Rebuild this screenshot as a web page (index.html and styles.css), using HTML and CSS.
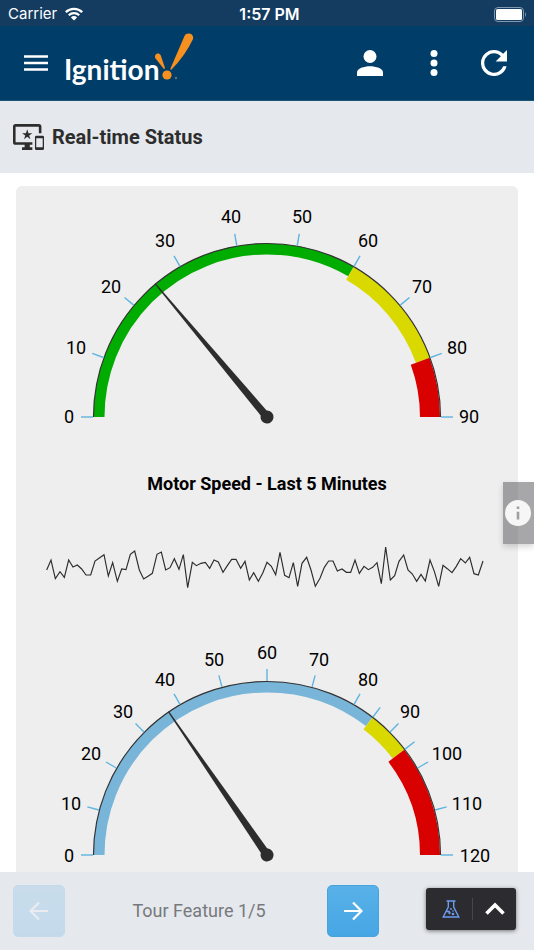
FILE: index.html
```html
<!DOCTYPE html>
<html lang="en">
<head>
<meta charset="utf-8">
<meta name="viewport" content="width=device-width, initial-scale=1">
<title>Real-time Status</title>
<link rel="stylesheet" href="styles.css">
</head>
<body>
<div class="status-bar">
  <div class="carrier"><span>Carrier</span>
    <svg class="wifi" viewBox="0 0 18 14" aria-hidden="true"><g fill="none" stroke="#fff" stroke-width="2.3"><path d="M.8 5.1a11.8 11.8 0 0 1 16.4 0"/><path d="M3.8 8.3a7.4 7.4 0 0 1 10.4 0"/></g><path d="M5.9 10.4a4.4 4.4 0 0 1 6.2 0L9 13.5z" fill="#fff"/></svg>
  </div>
  <time class="clock">1:57 PM</time>
  <svg class="battery" viewBox="0 0 33 15" aria-hidden="true"><rect x=".5" y=".5" width="29" height="14" rx="3.5" fill="none" stroke="#7f99b0"/><rect x="2" y="2" width="26" height="11" rx="1.5" fill="#fff"/><path d="M31 5q2 2.500 0 5z" fill="#7f99b0"/></svg>
</div>
<header class="app-bar">
  <button class="icon-button menu" aria-label="Menu"><svg viewBox="0 0 24 16"><path d="M0 1.500h24M0 8h24M0 14.500h24" stroke="#fff" stroke-width="2.500"/></svg></button>
  <a class="logo" href="#" aria-label="Ignition">
    <span class="logo-text">Ignition</span>
    <svg class="logo-mark" viewBox="0 0 42 50" aria-hidden="true"><g fill="#f7901e"><path d="M1.200 26C0 21.500 5 20 6.800 23.500L11 36Q10.500 37.500 9.500 36.500Z"/><path d="M30.500 4C32.500-.5 40.500 1.500 39 7Q31 24 17.500 37.500Q16 38.500 16.500 36.500Z"/><circle cx="13" cy="43" r="4.600"/></g><circle cx="22" cy="46" r="1.200" fill="#62717a"/></svg>
  </a>
  <nav class="actions" aria-label="Application">
    <button class="icon-button account" aria-label="Account"><svg class="person" viewBox="0 0 26 26"><circle cx="13" cy="6.500" r="6.500" fill="#fff"/><path d="M0 26v-3.500C0 18.500 7 16.300 13 16.300s13 2.200 13 6.200V26z" fill="#fff"/></svg></button>
    <button class="icon-button" aria-label="More"><svg class="dots" viewBox="0 0 8 26"><g fill="#fff"><circle cx="4" cy="3.500" r="3.500"/><circle cx="4" cy="13" r="3.500"/><circle cx="4" cy="22.500" r="3.500"/></g></svg></button>
    <button class="icon-button" aria-label="Refresh"><svg class="refresh" viewBox="4 4 16 16"><path fill="#fff" d="M17.650 6.350A7.950 7.950 0 0 0 12 4a8 8 0 1 0 7.730 10h-2.080A6 6 0 1 1 12 6c1.660 0 3.140.69 4.220 1.780L13 11h7V4z"/></svg></button>
  </nav>
</header>
<div class="page-title">
  <svg viewBox="0 0 24 20" aria-hidden="true"><path fill="#2d2d2d" d="M23 9h-5a1 1 0 0 0-1 1v9a1 1 0 0 0 1 1h5a1 1 0 0 0 1-1v-9a1 1 0 0 0-1-1zm0 9h-5v-7h5zM20 0H2a2 2 0 0 0-2 2v12a2 2 0 0 0 2 2h7v2H7v2h8v-2h-2v-2h2v-2H2V2h18v5h2V2a2 2 0 0 0-2-2zm-8.030 7L11 4l-.970 3H7l2.470 1.760-.940 2.910L11 9.870l2.470 1.800-.940-2.910L15 7z"/></svg>
  <h1>Real-time Status</h1>
</div>
<main class="content">
  <section class="card">
    <svg class="gauge" viewBox="-251 -231 502 271" role="img" aria-label="Speed gauge, 0 to 90">
      <g class="band">
        <path class="green" d="M-168 0A168 168 0 0 1 168 0" pathLength="90" stroke-width="11" stroke-dasharray="60 100"/>
        <path class="yellow" d="M-166 0A166 166 0 0 1 166 0" pathLength="90" stroke-width="15" stroke-dasharray="0 60 20 100"/>
        <path class="red" d="M-163 0A163 163 0 0 1 163 0" pathLength="90" stroke-width="20" stroke-dasharray="0 80 10 100"/>
      </g>
      <path class="rim" d="M-173.5 0A173.5 173.5 0 0 1 173.5 0"/>
      <g class="ticks"><path d="M-174 0h-12"/><path d="M-174 0h-12" transform="rotate(20)"/><path d="M-174 0h-12" transform="rotate(40)"/><path d="M-174 0h-12" transform="rotate(60)"/><path d="M-174 0h-12" transform="rotate(80)"/><path d="M-174 0h-12" transform="rotate(100)"/><path d="M-174 0h-12" transform="rotate(120)"/><path d="M-174 0h-12" transform="rotate(140)"/><path d="M-174 0h-12" transform="rotate(160)"/><path d="M-174 0h-12" transform="rotate(180)"/></g>
      <g class="labels"><text x="-198" y="6">0</text><text x="-191" y="-63">10</text><text x="-156" y="-124">20</text><text x="-102" y="-170">30</text><text x="-36" y="-194">40</text><text x="35" y="-194">50</text><text x="101" y="-170">60</text><text x="155" y="-124">70</text><text x="190" y="-63">80</text><text x="202" y="6">90</text></g>
      <g class="needle" transform="rotate(50)"><path d="M-174-.6L0-4V4L-174 .6z"/><circle r="6.500"/></g>
    </svg>
    <h2>Motor Speed - Last 5 Minutes</h2>
    <svg class="sparkline" viewBox="-72 0 1506 210" role="img" aria-label="Motor speed over the last 5 minutes">
      <polyline points="20,120 33,90 46,146 60,125 73,142 86,90 99,111 112,105 125,117 138,135 152,135 165,93 178,84 192,74 205,138 218,98 232,154 245,117 258,119 271,73 284,63 298,120 311,147 324,139 337,130 351,73 364,66 377,120 390,113 403,86 417,118 430,74 443,173 457,97 469,107 483,100 496,97 509,115 522,90 535,96 549,127 562,107 575,88 588,88 602,115 615,94 628,150 641,128 655,154 668,130 681,97 694,109 707,134 720,67 734,136 747,143 760,98 773,169 786,100 800,82 813,120 826,169 840,145 853,112 866,93 879,93 892,123 906,117 919,127 932,127 945,90 958,130 972,109 985,119 998,112 1011,98 1024,161 1037,51 1051,150 1064,137 1077,94 1091,75 1104,120 1117,132 1130,154 1143,133 1156,153 1170,90 1183,124 1196,169 1209,106 1222,116 1236,128 1249,109 1262,86 1276,99 1289,82 1302,131 1315,135 1329,93"/>
    </svg>
    <svg class="gauge gauge-second" viewBox="-251 -231 502 271" role="img" aria-label="Speed gauge, 0 to 120">
      <g class="band">
        <path class="blue" d="M-168 0A168 168 0 0 1 168 0" pathLength="120" stroke-width="11" stroke-dasharray="85 200"/>
        <path class="yellow" d="M-166 0A166 166 0 0 1 166 0" pathLength="120" stroke-width="15" stroke-dasharray="0 85 10 200"/>
        <path class="red" d="M-163 0A163 163 0 0 1 163 0" pathLength="120" stroke-width="20" stroke-dasharray="0 95 25 200"/>
      </g>
      <path class="rim" d="M-173.5 0A173.5 173.5 0 0 1 173.5 0"/>
      <g class="ticks"><path d="M-174 0h-12"/><path d="M-174 0h-12" transform="rotate(15)"/><path d="M-174 0h-12" transform="rotate(30)"/><path d="M-174 0h-12" transform="rotate(45)"/><path d="M-174 0h-12" transform="rotate(60)"/><path d="M-174 0h-12" transform="rotate(75)"/><path d="M-174 0h-12" transform="rotate(90)"/><path d="M-174 0h-12" transform="rotate(105)"/><path d="M-174 0h-12" transform="rotate(120)"/><path d="M-174 0h-12" transform="rotate(127.500)"/><path d="M-174 0h-12" transform="rotate(135)"/><path d="M-174 0h-12" transform="rotate(142.500)"/><path d="M-174 0h-12" transform="rotate(150)"/><path d="M-174 0h-12" transform="rotate(165)"/><path d="M-174 0h-12" transform="rotate(180)"/></g>
      <g class="labels"><text x="-198" y="7">0</text><text x="-196" y="-45">10</text><text x="-176" y="-95">20</text><text x="-144" y="-137">30</text><text x="-102" y="-169">40</text><text x="-53" y="-189">50</text><text x="0" y="-196">60</text><text x="52" y="-189">70</text><text x="101" y="-169">80</text><text x="143" y="-137">90</text><text x="180" y="-95">100</text><text x="200" y="-45">110</text><text x="208" y="7">120</text></g>
      <g class="needle" transform="rotate(55.500)"><path d="M-174-.6L0-4V4L-174 .6z"/><circle r="6.500"/></g>
    </svg>
  </section>
  <button class="info-tab" aria-label="Information"><svg viewBox="0 0 26 26"><circle cx="13" cy="13" r="13" fill="#fff" fill-opacity=".9"/><path d="M11.700 6.500h2.600v2.600h-2.600zM11.700 11.700h2.600v7.800h-2.600z" fill="#a0a0a1"/></svg></button>
</main>
<footer class="tour-bar">
  <button class="step" disabled aria-label="Previous"><svg viewBox="0 0 20 20"><path d="M19 10H2M10 1.500L1.500 10L10 18.500"/></svg></button>
  <span class="tour-label">Tour Feature 1/5</span>
  <button class="step" aria-label="Next"><svg viewBox="0 0 20 20"><path d="M1 10H18M10 1.500L18.500 10L10 18.500"/></svg></button>
  <div class="dev-tools">
    <button class="tool" aria-label="Lab"><svg class="flask" viewBox="0 0 18 18"><g fill="none" stroke="#6b9cf2" stroke-width="1.400"><path d="M4.500 1h9M6.300 1v6L1.200 17h15.600L11.700 7V1M4.500 11.500H8"/></g><g fill="#6b9cf2"><circle cx="9" cy="9" r=".9"/><circle cx="7.500" cy="13" r="1.200"/><circle cx="11" cy="14" r="1.300"/><circle cx="11" cy="11" r=".8"/></g></svg></button>
    <button class="tool expand" aria-label="Expand"><svg class="chevron" viewBox="0 0 20 13"><path d="M1.500 11.500L10 3l8.500 8.500" fill="none" stroke="#fff" stroke-width="3.600"/></svg></button>
  </div>
</footer>
</body>
</html>
```
FILE: styles.css
```css
* { box-sizing: border-box; }
body {
  margin: 0;
  height: 100vh;
  display: flex;
  flex-direction: column;
  overflow: hidden;
  background: #fff;
  color: #2d2d2d;
  font-family: Roboto, "Liberation Sans", sans-serif;
}
button { padding: 0; border: 0; background: none; cursor: pointer; }
svg { display: block; }
h1, h2 { margin: 0; }

.status-bar {
  display: grid;
  grid-template-columns: 1fr auto 1fr;
  align-items: center;
  flex: none;
  height: 26px;
  padding: 2px 3px 0 8px;
  background: #133c60;
  color: #fff;
  font: 15px/24px Inter, sans-serif;
}
.carrier { display: flex; align-items: center; gap: 8px; }
.wifi { width: 18px; height: 14px; }
.clock { font-size: 16px; font-weight: 600; }
.battery { width: 33px; height: 15px; justify-self: end; margin-right: 4px; }

.app-bar {
  display: flex;
  align-items: center;
  flex: none;
  height: 75px;
  padding: 0 27px 0 24px;
  background: #003e69;
  border-bottom: 1px solid #1d5277;
}
.icon-button { display: grid; place-items: center; }
.menu svg { width: 24px; height: 16px; }
.logo {
  display: flex;
  align-items: flex-start;
  margin-left: 16px;
  color: #fff;
  text-decoration: none;
}
.logo-text { font: 700 28px/50px Lato, sans-serif; padding-top: 12px; }
.logo-mark { width: 42px; height: 50px; margin-left: -5px; }
.actions { display: flex; margin-left: auto; gap: 43px; }
.account { margin-right: 4px; }
.person { width: 26px; height: 26px; }
.dots { width: 8px; height: 26px; }
.refresh { width: 26px; height: 26px; }

.page-title {
  display: flex;
  align-items: center;
  gap: 8px;
  flex: none;
  height: 72px;
  padding: 0 13px;
  background: #e5e8ed;
}
.page-title svg { width: 31px; height: 26px; }
.page-title h1 { font-size: 20px; line-height: 24px; font-weight: 700; }

.content {
  position: relative;
  flex: 1;
  min-height: 0;
  overflow: hidden;
  padding: 13px 16px 0;
}
.card { background: #eee; border-radius: 6px; }
.gauge, .sparkline { width: 100%; height: auto; }
.band path { fill: none; }
.green { stroke: #00ac00; }
.blue { stroke: #78b5d9; }
.yellow { stroke: #d9d900; }
.red { stroke: #d90000; }
.rim { fill: none; stroke: #333; stroke-width: 1.2; }
.ticks { stroke: #5fb4e0; stroke-width: 1.4; }
.labels { font-size: 18px; fill: #000; text-anchor: middle; }
.needle { fill: #2d2d2d; }
.card h2 {
  margin: 15px 0 34px;
  color: #000;
  font-size: 18px;
  line-height: 24px;
  text-align: center;
}
.sparkline polyline { fill: none; stroke: #2d2d2d; stroke-width: 3.5; }
.gauge-second { margin-top: 24px; }

.info-tab {
  position: absolute;
  top: 309px;
  right: 0;
  width: 31px;
  height: 62px;
  display: grid;
  place-items: center;
  padding-right: 1px;
  background: rgba(80, 80, 83, 0.5);
  box-shadow: 0 3px 6px rgba(0, 0, 0, 0.16);
}
.info-tab svg { width: 26px; height: 26px; }

.tour-bar {
  display: flex;
  align-items: center;
  flex: none;
  height: 78px;
  padding: 0 18px 0 13px;
  background: #e5e8ed;
}
.step {
  width: 52px;
  height: 52px;
  display: grid;
  place-items: center;
  border: 1px solid #47a3de;
  border-radius: 5px;
  background: linear-gradient(#59b1e8, #46a6e4);
}
.step:disabled { opacity: 0.2; }
.step svg { width: 20px; height: 20px; fill: none; stroke: #fff; stroke-width: 2.2; }
.tour-label {
  flex: 1;
  padding-left: 6px;
  color: #77797c;
  font-size: 18px;
  line-height: 24px;
  text-align: center;
}
.dev-tools {
  display: flex;
  width: 90px;
  height: 42px;
  margin: 0 0 5px 47px;
  padding: 10px 0;
  border-radius: 3px;
  background: #2b2b30;
  box-shadow: 0 1px 4px rgba(0, 0, 0, 0.5);
}
.tool { flex: 1; display: grid; place-items: center; padding-left: 3px; }
.expand { border-left: 1px solid #46464b; padding: 0; }
.flask { width: 18px; height: 18px; }
.chevron { width: 20px; height: 13px; }
```
